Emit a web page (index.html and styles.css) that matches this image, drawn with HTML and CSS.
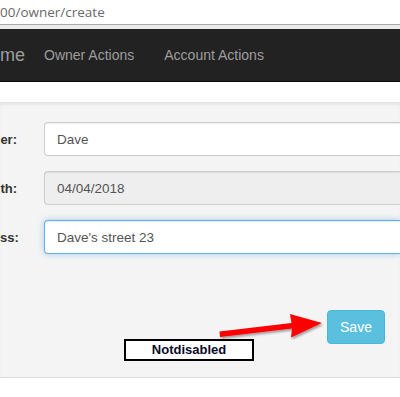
FILE: index.html
```html
<!DOCTYPE html>
<html lang="en">
<head>
    <meta charset="UTF-8">
    <title>Create Owner</title>
    <link rel="stylesheet" href="styles.css">
</head>
<body>
    <!-- browser address bar -->
    <div class="address-bar">00/owner/create</div>
    <div class="address-gap"></div>

    <!-- top navigation -->
    <nav class="navbar">
        <span class="brand">me</span>
        <a class="nav-link" href="#">Owner Actions</a>
        <a class="nav-link" href="#">Account Actions</a>
    </nav>

    <div class="well">
        <form class="owner-form">
            <div class="form-group">
                <label class="form-label">er:</label>
                <input class="form-control" type="text" value="Dave">
            </div>
            <div class="form-group">
                <label class="form-label">th:</label>
                <input class="form-control" type="text" value="04/04/2018" disabled>
            </div>
            <div class="form-group">
                <label class="form-label">ss:</label>
                <input class="form-control focused" type="text" value="Dave's street 23">
            </div>
            <div class="form-actions">
                <button class="btn-save" type="button">Save</button>
            </div>
        </form>

        <!-- screenshot annotation -->
        <svg class="arrow" width="120" height="30" viewBox="0 0 120 30">
            <defs>
                <filter id="arrow-shadow" x="-10%" y="-30%" width="130%" height="180%">
                    <feDropShadow dx="1" dy="2" stdDeviation="1.2" flood-color="#000" flood-opacity="0.35"/>
                </filter>
            </defs>
            <g filter="url(#arrow-shadow)">
                <polygon fill="#ff0000" points="2,27 74,18.5 73,27.5 104,13 72,4 73.5,13 1.5,21.5"/>
            </g>
        </svg>
        <div class="note">Notdisabled</div>
    </div>
</body>
</html>
```

FILE: styles.css
```css
html, body {
    margin: 0;
    padding: 0;
    overflow: hidden;
    background-color: #fff;
    font-family: "Liberation Sans", Arial, sans-serif;
}

.address-bar {
    height: 24px;
    line-height: 25px;
    font-family: "Open Sans", "Noto Sans", sans-serif;
    font-size: 13.5px;
    color: #6a6a6a;
    border-bottom: 1px solid #a9a9a9;
    white-space: nowrap;
}

.address-gap {
    height: 4px;
    background-color: #ececec;
}

.navbar {
    display: flex;
    align-items: center;
    height: 52px;
    background-color: #222;
    border-bottom: 1px solid #080808;
    white-space: nowrap;
}

.brand {
    width: 16px;
    padding-right: 13px;
    font-size: 18px;
    color: #9d9d9d;
}

.nav-link {
    padding: 0 15px;
    font-size: 14px;
    color: #9d9d9d;
    text-decoration: none;
}

.well {
    position: relative;
    margin-top: 20px;
    height: 274px;
    background-color: #f4f4f4;
    border-top: 1px solid #e3e3e3;
    border-bottom: 1px solid #dedede;
    box-shadow: inset 0 2px 2px rgba(0, 0, 0, 0.05);
}

.owner-form {
    padding-top: 19px;
}

.form-group {
    display: flex;
    align-items: center;
    gap: 27px;
    margin-bottom: 15px;
}

.form-label {
    flex: none;
    width: 17px;
    text-align: right;
    font-size: 13px;
    font-weight: bold;
    color: #333;
    white-space: nowrap;
}

.form-control {
    flex: 1;
    min-width: 0;
    height: 34px;
    box-sizing: border-box;
    padding: 6px 12px;
    font-family: "Liberation Sans", Arial, sans-serif;
    font-size: 13.5px;
    color: #555;
    background-color: #fff;
    border: 1px solid #ccc;
    border-right-width: 0;
    border-radius: 4px 0 0 4px;
    box-shadow: inset 0 1px 1px rgba(0, 0, 0, 0.075);
}

.form-control:disabled {
    background-color: #eee;
    color: #555;
}

.form-control.focused {
    border-color: #66afe9;
    box-shadow: inset 0 1px 1px rgba(0, 0, 0, 0.075), 0 0 6px rgba(102, 175, 233, 0.6);
}

.form-actions {
    display: flex;
    justify-content: flex-end;
    padding-top: 41px;
    padding-right: 15px;
}

.btn-save {
    width: 58px;
    height: 34px;
    font-family: "Liberation Sans", Arial, sans-serif;
    font-size: 14px;
    color: #fff;
    background-color: #5bc0de;
    border: 1px solid #46b8da;
    border-radius: 4px;
}

/* annotation overlay */
.arrow {
    position: absolute;
    left: 218px;
    top: 207px;
}

.note {
    position: absolute;
    left: 124px;
    top: 236px;
    width: 126px;
    height: 18px;
    line-height: 18px;
    background-color: #fff;
    border: 2px solid #000;
    text-align: center;
    font-size: 13px;
    font-weight: bold;
    color: #0a0a28;
}
```
